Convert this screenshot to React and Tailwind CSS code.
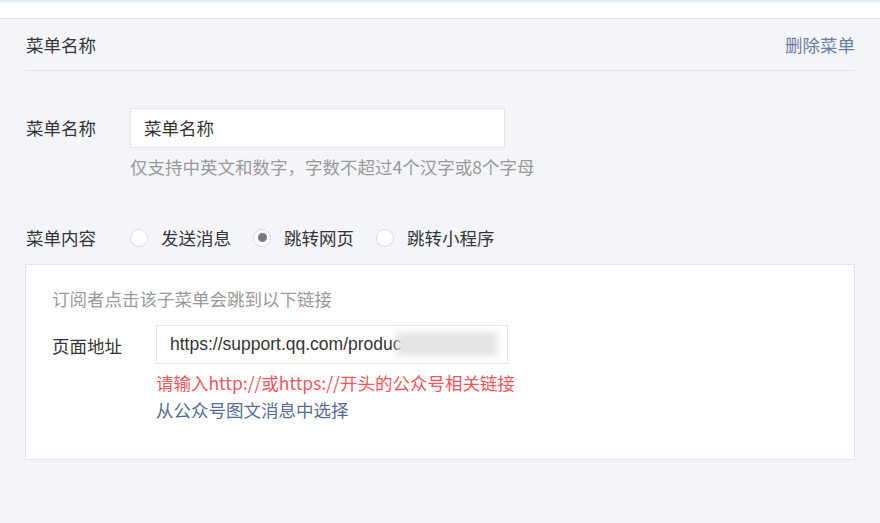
import { useState } from 'react';

const font = { fontFamily: '"Noto Sans CJK SC", "Liberation Sans", sans-serif' };

function Radio({ label, checked, onClick }) {
  return (
    <button onClick={onClick} className="flex items-center gap-[13px] text-[#353535]">
      <span className="w-[18px] h-[18px] rounded-full border border-[#dcdcdc] bg-white flex items-center justify-center">
        {checked && <span className="w-[9px] h-[9px] rounded-full bg-[#7a7a7a]" />}
      </span>
      <span>{label}</span>
    </button>
  );
}

export default function App() {
  const [type, setType] = useState('page');

  return (
    <div className="w-[880px] h-[523px] bg-[#f4f5f9] text-[17.5px] leading-none overflow-hidden" style={font}>
      <div className="h-[19px] bg-white border-t-2 border-[#e3ebf5] border-b border-b-[#e4e6eb]" />
      <div className="px-[25px]">
        <div className="flex justify-between items-center h-[52px] border-b border-[#e2e4e8] pl-px">
          <span className="text-[#353535]">菜单名称</span>
          <a className="text-[#6d7f9f]">删除菜单</a>
        </div>

        <div className="flex mt-[37px] pl-px">
          <div className="w-[104px] pt-[11px] text-[#353535]">菜单名称</div>
          <div>
            <div className="w-[375px] h-[40px] bg-white border border-[#e6e7eb] flex items-center px-[13px] text-[#353535]">
              菜单名称
            </div>
            <div className="mt-[10px] text-[#9a9a9a]">仅支持中英文和数字，字数不超过4个汉字或8个字母</div>
          </div>
        </div>

        <div className="flex items-center mt-[53px] pl-px">
          <div className="w-[104px] text-[#353535]">菜单内容</div>
          <div className="flex gap-[22px]">
            <Radio label="发送消息" checked={type === 'msg'} onClick={() => setType('msg')} />
            <Radio label="跳转网页" checked={type === 'page'} onClick={() => setType('page')} />
            <Radio label="跳转小程序" checked={type === 'mini'} onClick={() => setType('mini')} />
          </div>
        </div>

        <div className="mt-[17px] bg-white border border-[#e6e7eb] h-[196px] px-[26px] pt-[25px]">
          <div className="text-[#9a9a9a]">订阅者点击该子菜单会跳到以下链接</div>
          <div className="flex mt-[18px]">
            <div className="w-[104px] pt-[12px] text-[#353535]">页面地址</div>
            <div>
              <div className="relative w-[352px] h-[39px] border border-[#e6e7eb] bg-white flex items-center px-[13px] text-[#353535] overflow-hidden" style={{ fontFamily: '"Liberation Sans", sans-serif' }}>
                https://support.qq.com/produc
                <div className="absolute left-[240px] top-[6px] w-[100px] h-[24px] bg-[#e4e4e4] blur-[3px]" />
              </div>
              <div className="mt-[10px] text-[#f2565a]">请输入http://或https://开头的公众号相关链接</div>
              <a className="block mt-[9px] text-[#576b95]">从公众号图文消息中选择</a>
            </div>
          </div>
        </div>
      </div>
    </div>
  );
}
